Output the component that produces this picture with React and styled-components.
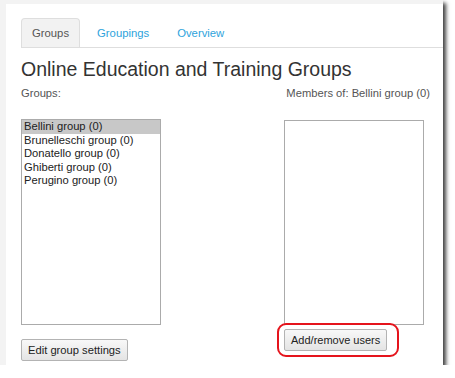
import React from "react";
import styled, { createGlobalStyle } from "styled-components";

const GlobalStyle = createGlobalStyle`
  html, body {
    margin: 0;
    padding: 0;
    background: #fff;
  }
  body {
    font-family: "Liberation Sans", Arial, sans-serif;
  }
`;

const Frame = styled.div`
  width: 443px;
  height: 365px;
  box-sizing: border-box;
  padding: 4px 0 0 6px;
  background: #f3f3f3;
  box-shadow: 3px 3px 4px rgba(0, 0, 0, 0.75);
  overflow: hidden;
`;

const Panel = styled.div`
  height: 100%;
  box-sizing: border-box;
  background: #fff;
  padding: 14px 0 0 15px;
`;

const Tabs = styled.div`
  display: flex;
  border-bottom: 1px solid #dedede;
  margin-right: -20px;
`;

const Tab = styled.div`
  height: 29px;
  line-height: 28px;
  padding: 0 10px 0 ${(p) => (p.$active ? 10 : 11)}px;
  margin-right: 5px;
  font-size: 11.3px;
  box-sizing: border-box;
  border: 1px solid ${(p) => (p.$active ? "#dedede" : "transparent")};
  border-bottom: none;
  border-radius: 4px 4px 0 0;
  background: ${(p) => (p.$active ? "#f2f2f2" : "transparent")};
  color: ${(p) => (p.$active ? "#555" : "#2ea3dc")};
`;

const Heading = styled.h2`
  margin: 10px 0 0;
  font-size: 19.5px;
  line-height: 22px;
  font-weight: normal;
  color: #333;
`;

const Columns = styled.div`
  display: flex;
  margin-top: 6px;
`;

const Column = styled.div`
  display: flex;
  flex-direction: column;
  align-items: flex-start;
  width: ${(p) => p.$width}px;
  margin-left: ${(p) => p.$offset || 0}px;
`;

const Label = styled.div`
  font-size: 11.2px;
  line-height: 14px;
  color: #555;
  align-self: ${(p) => (p.$right ? "flex-end" : "flex-start")};
`;

const ListBox = styled.div`
  width: 140px;
  height: ${(p) => p.$height}px;
  box-sizing: border-box;
  border: 1px solid #ababab;
  margin-top: ${(p) => p.$top}px;
  background: #fff;
`;

const Option = styled.div`
  font-size: 11.2px;
  line-height: 13.5px;
  padding-left: 2px;
  color: #222;
  background: ${(p) => (p.$selected ? "#c8c8c8" : "transparent")};
`;

const Button = styled.button`
  height: ${(p) => p.$height}px;
  padding: 0 6px;
  font-family: "Liberation Sans", Arial, sans-serif;
  font-size: ${(p) => p.$size}px;
  color: #222;
  border: 1px solid #b3b3b3;
  border-radius: 2px;
  background: linear-gradient(#f8f8f8, #e4e4e4);
  margin-top: ${(p) => p.$top}px;
`;

const Highlight = styled.div`
  position: relative;
  margin-top: 4px;

  &::after {
    content: "";
    position: absolute;
    left: -7px;
    right: -12px;
    top: -6px;
    bottom: -6px;
    border: 2.5px solid #e5141c;
    border-radius: 9px;
    pointer-events: none;
  }
`;

const groups = [
  "Bellini group (0)",
  "Brunelleschi group (0)",
  "Donatello group (0)",
  "Ghiberti group (0)",
  "Perugino group (0)",
];

export default function App() {
  return (
    <>
      <GlobalStyle />
      <Frame>
        <Panel>
          <Tabs>
            <Tab $active>Groups</Tab>
            <Tab>Groupings</Tab>
            <Tab>Overview</Tab>
          </Tabs>
          <Heading>Online Education and Training Groups</Heading>
          <Columns>
            <Column $width={140}>
              <Label>Groups:</Label>
              <ListBox $top={19} $height={206}>
                {groups.map((g, i) => (
                  <Option key={g} $selected={i === 0}>
                    {g}
                  </Option>
                ))}
              </ListBox>
              <Button $height={22} $size={11.2} $top={14}>
                Edit group settings
              </Button>
            </Column>
            <Column $width={146} $offset={123}>
              <Label $right>Members of: Bellini group (0)</Label>
              <ListBox $top={20} $height={205} />
              <Highlight>
                <Button $height={22} $size={11} $top={0}>
                  Add/remove users
                </Button>
              </Highlight>
            </Column>
          </Columns>
        </Panel>
      </Frame>
    </>
  );
}
